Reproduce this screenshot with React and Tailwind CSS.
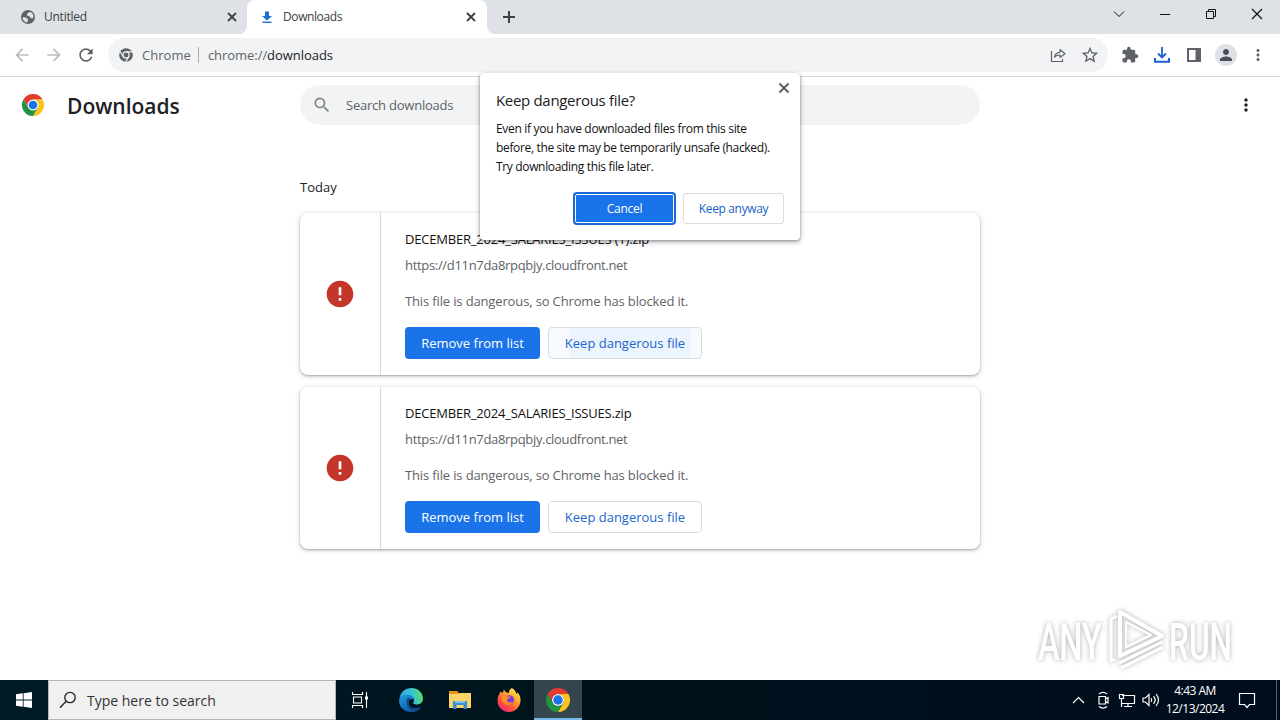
import React from 'react';
import { MdArrowBack, MdArrowForward, MdRefresh, MdStarBorder, MdExtension, MdPerson, MdMoreVert, MdSearch, MdError } from "react-icons/md";

const files = [
    { id: 1, name: 'DECEMBER_2024_SALARIES_ISSUES (1).zip', url: 'https://d11n7da8rpqbjy.cloudfront.net', hover: true },
    { id: 2, name: 'DECEMBER_2024_SALARIES_ISSUES.zip', url: 'https://d11n7da8rpqbjy.cloudfront.net', hover: false },
]

const ChromeLogo = ({ className = '' }) => {
    return <svg viewBox="0 0 48 48" className={className}>
        <circle cx="24" cy="24" r="12" fill="#fff" />
        <path d="M24,12H44.78a23.99,23.99,0,0,0-41.56,0L13.61,30A11.99,11.99,0,0,1,24,12Z" fill="#e33b2e" />
        <path d="M34.39,30,24,48A23.99,23.99,0,0,0,44.78,12H24A11.99,11.99,0,0,1,34.39,30Z" fill="#fcc31e" />
        <path d="M13.61,30,3.22,12A23.99,23.99,0,0,0,24,48L34.39,30a11.99,11.99,0,0,1-20.78,0Z" fill="#229342" />
        <circle cx="24" cy="24" r="9.5" fill="#1a73e8" />
    </svg>
}

const ChromeMono = ({ className = '' }) => {
    return <svg viewBox="0 0 48 48" className={className}>
        <circle cx="24" cy="24" r="23.5" fill="#5f6368" />
        <circle cx="24" cy="24" r="10.5" fill="none" stroke="#f1f3f4" strokeWidth="4" />
        <path d="M24 13H45M14 29L4 12M34 30L23 47" stroke="#f1f3f4" strokeWidth="4" />
    </svg>
}

const Globe = ({ className = '' }) => {
    return <svg viewBox="0 0 16 16" className={className}>
        <circle cx="8" cy="8" r="7" fill="#5f6368" />
        <path d="M2.500 8.200L6 8.600L8 10.200V11.500L7 13.500C4.500 13 2.500 11 2.500 8.200ZM7 5.500C7 4 8.500 3.800 9.500 3L11 3.300C12.800 4.500 13.600 6 13.500 8.500L12 9.500L10 8.500L9.500 7.200L7.500 7Z" fill="#dee1e6" />
    </svg>
}

const Cross = ({ className = '' }) => {
    return <svg viewBox="0 0 14 14" className={className} fill="none" stroke="currentColor" strokeWidth="1.800">
        <path d="M3 3L11 11M11 3L3 11" />
    </svg>
}

const Flare = ({ flip = false }) => {
    return <svg viewBox="0 0 8 8" className={`absolute bottom-0 size-2 ${flip ? '-right-2 -scale-x-100' : '-left-2'}`}>
        <path d="M8 0V8H0A8 8 0 0 0 8 0Z" fill="#fff" />
    </svg>
}

const TabStrip = () => {
    return <div className="flex h-[34px] bg-[#dee1e6] text-[#3c4043]">
        <div className="flex w-[247px] items-center pl-5 pr-2">
            <Globe className="size-4" />
            <span className="ml-2 flex-1 text-[12px] tracking-[-0.25px]">Untitled</span>
            <Cross className="size-[14px]" />
        </div>
        <div className="relative flex w-[240px] items-center rounded-t-lg bg-white pl-3 pr-[9px]">
            <Flare />
            <svg viewBox="0 0 16 16" className="size-4">
                <path d="M6 2.500H10V7H13L8 11.500L3 7H6Z" fill="#1a6fd0" />
                <path d="M3.500 13.300H12.500" stroke="#1a6fd0" strokeWidth="1.400" />
            </svg>
            <span className="ml-2 flex-1 text-[12px] tracking-[-0.4px]">Downloads</span>
            <Cross className="size-[14px]" />
            <Flare flip />
        </div>
        <div className="flex flex-1 items-center pl-[13px]">
            <svg viewBox="0 0 18 18" className="size-[18px]" fill="none" stroke="currentColor" strokeWidth="2">
                <path d="M9 3V15M3 9H15" />
            </svg>
        </div>
        <svg viewBox="0 0 180 34" className="h-[34px] w-[180px]" fill="none" stroke="#111">
            <path d="M14 11.500L19 16.500L24 11.500" />
            <path d="M60 14.500H70" />
            <path d="M106.500 11.500H113.500V18.500H106.500ZM108.500 11.500V9.500H115.500V16.500H113.500" />
            <path d="M152 9L162 19M162 9L152 19" strokeWidth="1.200" />
        </svg>
    </div>
}

const Toolbar = () => {
    return <div className="flex h-[43px] items-center border-b border-[#d8dadd] pl-3 text-[#5f6368]">
        <MdArrowBack className="size-5 text-[#babcbe]" />
        <MdArrowForward className="ml-3 size-5 text-[#babcbe]" />
        <MdRefresh className="ml-3 size-5" />
        <div className="ml-3 flex h-[34px] w-[1000px] items-center rounded-full bg-[#f1f3f4] pl-[11px] pr-2">
            <ChromeMono className="size-[14px]" />
            <span className="ml-[9px] pt-px text-[13px] tracking-[0.05px]">Chrome</span>
            <span className="ml-[7px] h-4 w-px bg-[#a9acb0]"></span>
            <span className="ml-[9px] flex-1 pt-px text-[13px] tracking-[-0.05px]">chrome://<span className="text-[#202124]">downloads</span></span>
            <svg viewBox="0 0 20 20" className="size-5" fill="none" stroke="#5f6368" strokeWidth="1.200">
                <path d="M3.500 6V16.500H14.500V14" />
                <path d="M6.500 12C7 8.800 9 7.500 12 7.300V4.500L17 8.800L12 12.500V10C9.800 10 8 10.500 6.500 12Z" strokeLinejoin="round" />
            </svg>
            <MdStarBorder className="ml-3 size-5" />
        </div>
        <MdExtension className="ml-[13px] size-[18px]" />
        <svg viewBox="0 0 18 18" className="ml-[14px] size-[18px]" fill="none" stroke="#1a5fd6" strokeWidth="2">
            <path d="M9 1V11M5 7.500L9 11.500L13 7.500" strokeWidth="1.800" />
            <path d="M2 12V15.800H16V12" />
        </svg>
        <svg viewBox="0 0 16 16" className="ml-[15px] size-4">
            <path d="M2 2H14V14H2Z" fill="none" stroke="#5f6368" strokeWidth="2" />
            <path d="M9.500 2H14V14H9.500Z" fill="#5f6368" />
        </svg>
        <span className="ml-[13px] flex size-[22px] items-center justify-center rounded-full bg-[#dee1e6]">
            <MdPerson className="size-[18px] text-[#4a4f5c]" />
        </span>
        <MdMoreVert className="ml-[12px] size-[18px]" />
    </div>
}

const Card = ({ file }) => {
    return <div className="flex h-[162px] rounded-lg bg-white shadow-[0_1px_2px_rgba(60,64,67,0.35),0_1px_4px_1px_rgba(60,64,67,0.18)]">
        <div className="flex w-[81px] items-center justify-center border-r border-[#d8d8d8]">
            <MdError className="size-8 text-[#c5362a]" />
        </div>
        <div className="flex flex-col pl-6 pt-4 text-[13px] leading-5 text-[#5f6368]">
            <span className="tracking-[-0.2px] text-[#111]">{file.name}</span>
            <span className="mt-1.5 tracking-[-0.32px]">{file.url}</span>
            <span className="mt-4 tracking-[-0.14px]">This file is dangerous, so Chrome has blocked it.</span>
            <div className="mt-4 flex gap-2">
                <button className="h-8 w-[135px] rounded bg-[#1a73e8] text-white">Remove from list</button>
                <button className={`h-8 w-[154px] rounded border border-[#dadce0] text-[#1a66cc] ${file.hover ? 'bg-[linear-gradient(90deg,#f6fafe_20px,#ecf4fd_20px,#ecf4fd_142px,#f6fafe_142px)]' : ''}`}>Keep dangerous file</button>
            </div>
        </div>
    </div>
}

const KeepDialog = () => {
    return <div className="absolute left-[480px] top-[73px] h-[167px] w-80 rounded bg-white px-4 pt-[18px] text-[#202124] shadow-[0_1px_3px_rgba(0,0,0,0.35),0_2px_5px_1px_rgba(0,0,0,0.18)]">
        <Cross className="absolute right-2 top-[7px] size-4 text-[#5f6368]" />
        <h2 className="text-[15px] leading-[18px] tracking-[-0.32px]">Keep dangerous file?</h2>
        <p className="mt-2.5 whitespace-nowrap text-[12px] leading-[19px] tracking-[-0.31px] text-[#111]">
            <span>Even if you have downloaded files from this site</span><br />
            <span className="tracking-[-0.34px]">before, the site may be temporarily unsafe (hacked).</span><br />
            <span className="tracking-[-0.34px]">Try downloading this file later.</span>
        </p>
        <div className="mt-[17px] flex justify-end gap-2 text-[12px]">
            <button className="-m-px h-[33px] w-[103px] rounded border-2 border-[#1a6ad8] bg-[#1a73e8] tracking-[-0.25px] text-white shadow-[inset_0_0_0_1px_#fff]">Cancel</button>
            <button className="h-[31px] w-[101px] rounded-[3px] border border-[#dadce0] tracking-[-0.35px] text-[#1a62c4]">Keep anyway</button>
        </div>
    </div>
}

const Watermark = () => {
    return <div className="absolute left-[1038px] top-[607px] flex h-[66px] w-[200px] items-center text-white drop-shadow-[0_0_2.5px_rgba(0,0,0,0.32)]">
        <span className="w-[68px] shrink-0 origin-left scale-x-[0.64] pt-1 font-['Roboto'] text-[51px] font-medium leading-none tracking-[-0.5px]">ANY</span>
        <svg viewBox="0 0 60 66" className="h-[66px] w-[60px] shrink-0" fill="none" stroke="#fff" strokeWidth="3" strokeLinejoin="round">
            <path d="M11 9L5 12V54L9 52" />
            <path d="M14 5V49L56 29Z" strokeWidth="4" />
            <path d="M13 56L56 35M15 61L57 40" />
            <path d="M20 15V40L45 28Z" strokeWidth="2" />
        </svg>
        <span className="ml-[3px] w-[64px] shrink-0 origin-left scale-x-[0.62] pt-1 font-['Roboto'] text-[51px] font-medium leading-none">RUN</span>
    </div>
}

const Taskbar = () => {
    return <div className="flex h-10 bg-linear-to-r from-[#001b24] via-[#00121c] to-[#000c1c] text-white">
        <div className="flex w-12 items-center justify-center">
            <svg viewBox="0 0 16 16" className="size-4" fill="#fff">
                <path d="M0 2.200L6.800 1.300V7.600H0ZM7.600 1.200L16 0V7.600H7.600ZM0 8.400H6.800V14.700L0 13.800ZM7.600 8.400H16V16L7.600 14.800Z" />
            </svg>
        </div>
        <div className="flex w-72 items-center border border-[#b5b5b5] bg-[#f0f0f0] pl-[10px] text-[#333]">
            <svg viewBox="0 0 18 18" className="size-[18px]" fill="none" stroke="#222" strokeWidth="1.300">
                <circle cx="11" cy="6.500" r="5.200" />
                <path d="M7.200 10.200L1 16.800" />
            </svg>
            <span className="ml-[10px] text-[14px]">Type here to search</span>
        </div>
        <div className="flex w-12 items-center justify-center">
            <svg viewBox="0 0 18 18" className="size-[18px]" fill="none" stroke="#fff" strokeWidth="1.100">
                <path d="M1.500 1V3.500H11.500V1M1.500 17V14.500H11.500V17M2.500 6H10.500V12H2.500ZM15.500 1V17" />
                <path d="M14 5.500H17V8.500H14Z" fill="#fff" stroke="none" />
            </svg>
        </div>
        <div className="ml-[3px] flex w-12 items-center justify-center">
            <svg viewBox="0 0 24 24" className="size-6">
                <defs>
                    <linearGradient id="edgeTop" x1="0" y1="0.600" x2="1" y2="0.400">
                        <stop offset="0" stopColor="#2aa7e0" />
                        <stop offset="0.550" stopColor="#35c3d8" />
                        <stop offset="1" stopColor="#62dc62" />
                    </linearGradient>
                    <linearGradient id="edgeBottom" x1="0" y1="0" x2="0.700" y2="1">
                        <stop offset="0" stopColor="#1b9de2" />
                        <stop offset="1" stopColor="#0f56a8" />
                    </linearGradient>
                </defs>
                <path d="M0.500 10.500C1.500 4 6.500 0 12.500 0C19 0 24 5 24 10.500C24 14.500 21 16.500 17.500 16.500C15 16.500 13.800 15.500 14.300 14.600C17 11 13 7 8.500 7C5 7 2 8.500 0.500 10.500Z" fill="url(#edgeTop)" />
                <path d="M0.100 12C0.800 8.500 4.500 6.800 8.500 7C12.500 7 14.800 9.500 14.800 12C12.500 9.500 9 12 9.500 15.500C10 20 16 22 21.800 19C20 22 16.500 24 12.500 24C5.500 24 -0.500 19 0.100 12Z" fill="url(#edgeBottom)" />
                <path d="M9.300 9.500C6 12 7 20.500 14 23.800C17.500 23.500 20.500 21.500 22 19C16 21.800 10 19.500 9.500 15.500C9.200 13 10.500 11.300 12 11Z" fill="#114a8b" />
            </svg>
        </div>
        <div className="flex w-[50px] items-center justify-center">
            <svg viewBox="0 0 22 20" className="h-5 w-[22px]">
                <path d="M0 1H8L10 3H22V7H0Z" fill="#e09a1c" />
                <path d="M0 4H9L11 3H22V18H0Z" fill="#fbd468" />
                <path d="M4 11H18V19H14.500V15H7.500V19H4Z" fill="#3a8dd0" />
                <path d="M6 11H16V13H6Z" fill="#7cc2f2" />
            </svg>
        </div>
        <div className="flex w-[49px] items-center justify-center pr-0.5">
            <svg viewBox="0 0 24 24" className="size-6">
                <defs>
                    <linearGradient id="fox" x1="0.850" y1="0.050" x2="0.200" y2="1">
                        <stop offset="0" stopColor="#fff04a" />
                        <stop offset="0.350" stopColor="#ffa828" />
                        <stop offset="0.700" stopColor="#ff4f40" />
                        <stop offset="1" stopColor="#ec2180" />
                    </linearGradient>
                </defs>
                <path d="M15 0C18 2 19 4 19.500 6C20.500 6 20.500 5 20.300 4C23 7 23.800 10 23.500 13C23 19.500 18 24 12 24C5.500 24 0.500 19 0.500 13C0.500 9.500 1.500 7 2.800 5.500L3 3.500C4 3.800 4.800 4.500 5.500 5L7 1.500C8 3.800 9.500 4.800 12 5C11.500 3 13 1 15 0Z" fill="url(#fox)" />
                <circle cx="12.300" cy="12" r="4.800" fill="#7a3fd8" />
                <path d="M4.500 8C7 6.500 9 7 10.500 8.500H13.500C13 10.500 11 10.500 10 11.500C9.500 14 13 15.500 16.500 13.500C15 18 7 18.500 5 13Z" fill="#ff8a28" />
            </svg>
        </div>
        <div className="flex w-12 items-center justify-center border-b-2 border-[#76b9ed] bg-[#34454e]">
            <ChromeLogo className="mt-0.5 size-6" />
        </div>
        <div className="flex flex-1 items-center justify-end">
            <svg viewBox="0 0 90 20" className="h-5 w-[90px]" fill="none" stroke="#fff" strokeWidth="1.200">
                <path d="M2 13L7.500 7.500L13 13" />
                <path d="M28 6.500H34.500V14H28ZM34.500 9L37 7.500V13L34.500 11.500M28 4C30.500 2 33.500 2 36 4M28 16.500C30.500 18.500 33.500 18.500 36 16.500" />
                <path d="M51 5.500H63.500V13.500H51M57 13.500V16.500M53 16.500H61M48.500 4.500H52.500V8.500H48.500ZM50.500 8.500V17" />
                <path d="M72 8H74.500L78 4.500V15.500L74.500 12H72ZM80 8C81 9.300 81 10.700 80 12M82.500 6.200C84.500 8.500 84.500 11.500 82.500 13.800M85 4.200C88.300 7.500 88.300 12.500 85 15.800" />
            </svg>
        </div>
        <div className="ml-0.5 flex w-[64px] flex-col items-center justify-center whitespace-nowrap text-[12px] leading-[18px] tracking-[-0.5px]">
            <span>4:43 AM</span>
            <span>12/13/2024</span>
        </div>
        <div className="mr-[3px] flex w-[50px] items-center border-r border-[#56606a] pl-[11px]">
            <svg viewBox="0 0 18 18" className="size-[18px]" fill="none" stroke="#fff" strokeWidth="1.200">
                <path d="M1.500 2.500H16.500V13.500H11.500L9 16.500L6.500 13.500H1.500Z" />
            </svg>
        </div>
    </div>
}

const App = () => {
    return <div className="relative flex h-[720px] w-[1280px] flex-col overflow-hidden bg-white font-['Open_Sans',sans-serif]">
        <TabStrip />
        <Toolbar />
        <div className="flex-1">
            <div className="flex h-14 items-center pl-[22px]">
                <ChromeLogo className="size-[22px]" />
                <h1 className="ml-[23px] w-[233px] pt-[3px] text-[21px] font-semibold text-[#202124]">Downloads</h1>
                <div className="flex h-10 w-[680px] items-center rounded-full bg-[#f1f3f4] pl-3 text-[#5f6368]">
                    <MdSearch className="size-5 text-[#808487]" />
                    <span className="ml-[14px] pt-px text-[13px] tracking-[-0.22px]">Search downloads</span>
                </div>
                <MdMoreVert className="ml-[256px] size-5 text-[#202124]" />
            </div>
            <div className="ml-[300px] w-[680px] pt-11">
                <div className="text-[13px] leading-5 text-[#202124]">Today</div>
                <div className="mt-4 flex flex-col gap-3">
                    {files.map(itm => <Card file={itm} key={itm.id} />)}
                </div>
            </div>
        </div>
        <Taskbar />
        <Watermark />
        <KeepDialog />
    </div>
}

export default App
